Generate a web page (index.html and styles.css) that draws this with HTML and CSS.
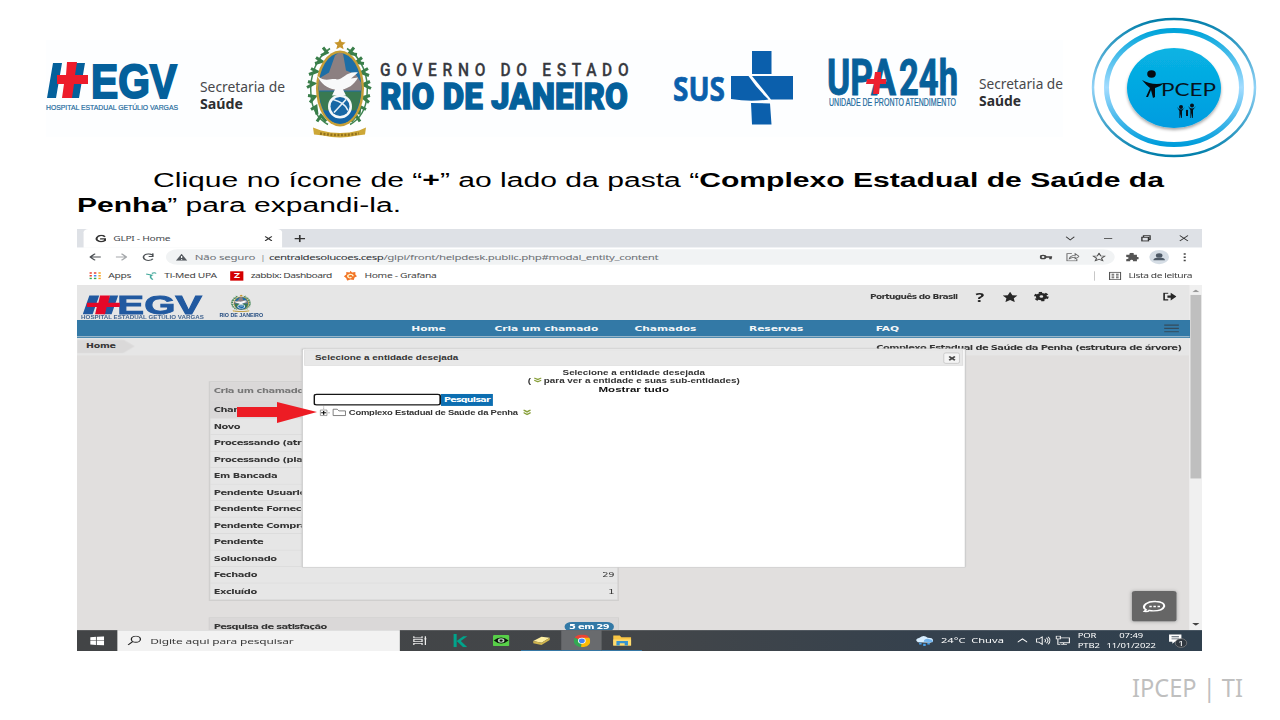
FILE: index.html
```html
<!DOCTYPE html>
<html lang="pt-BR">
<head>
<meta charset="utf-8">
<title>IPCEP | TI</title>
<link rel="stylesheet" href="styles.css">
</head>
<body>
<main class="slide">
<header class="brands">
<svg width="1280" height="165" viewBox="0 0 1280 165">
  <defs>
    <linearGradient id="ring" x1="0" y1="0" x2="0" y2="1"><stop offset="0" stop-color="#00a4da"/><stop offset=".5" stop-color="#a3dcff"/><stop offset="1" stop-color="#009ddb"/></linearGradient>
    <linearGradient id="rim" x1="0" y1="0" x2="0" y2="1"><stop offset="0" stop-color="#007eaa"/><stop offset=".5" stop-color="#92d3f7"/><stop offset="1" stop-color="#007eaa"/></linearGradient>
    <linearGradient id="disc" x1="0" y1="0" x2="0" y2="1"><stop offset="0" stop-color="#08b3e3"/><stop offset="1" stop-color="#009ce0"/></linearGradient>
    <filter id="soft" x="-20%" y="-20%" width="140%" height="140%"><feDropShadow dx="0" dy="2" stdDeviation="1.5" flood-opacity=".35"/></filter>
    <g id="crest">
      <path d="M25 10C12 18 4 37 6 57c1 14 8 24 17 29M42 10c15 9 22 28 20 47-1 14-8 24-17 29" fill="none" stroke="#3f8551" stroke-width="1.500"/>
      <path d="M18 9l4 5-6 3M11 19l6 4-7 2M6 30l6 3-8 3M3 43l6 2-7 4M3 57l7 1-5 6M6 71l5-3 1 8M12 83l4-6 5 6M49 9l-5 6 8 1M57 19l-6 5 8 1M63 30l-7 4 8 3M65 43l-7 3 8 4M65 57l-7 2 6 5M61 71l-6-3-1 8M55 83l-4-6-5 6" fill="none" stroke="#397e4a" stroke-width="3"/>
      <ellipse cx="35" cy="50" rx="24" ry="38" fill="#c69e37"/>
      <ellipse cx="35" cy="50" rx="21.500" ry="35.500" fill="#1d6ea6"/>
      <path d="M14 52V40l10-6 6-17 4-3 4 1 3 17 10 4 5 8v8z" fill="#8c8081"/>
      <path d="M14 53h42q-1 15-7 21H21q-6-6-7-21z" fill="#397951"/>
      <path d="M18 72h34q-6 13-17 13T18 72z" fill="#1364a5"/>
      <path d="M12 37c9 8 14 2 20 4 6 0 10-9 21-7l-7 6 7-1c-4 8-11 11-15 12l3 6H27l3-6c-8-1-14-6-18-14z" fill="#f8f9fa"/>
      <circle cx="35" cy="68" r="12" fill="#f4f8f9"/><circle cx="35" cy="68" r="9.500" fill="#1868a5"/>
      <path d="M28 61q12 3 15 11M29 74l12-13" fill="none" stroke="#e7f1f8" stroke-width="1.600"/>
      <path d="M35 0l1.600 3.600 4 .4-3 2.800 1 4L35 8.700l-3.700 2.100 1-4-3-2.800 4-.4z" fill="#c6952c"/>
      <path d="M8 89l8 3q19 5 38 0l7-3-1 7-8 1q-17 4-34 0l-9-1z" fill="#cda737"/>
      <path d="M15 95q19 3 39 0" fill="none" stroke="#92711d" stroke-width="2.500" stroke-dasharray="2 1.500"/>
    </g>
  </defs>
  <path d="M46 40h1017v97H46z" fill="#fdfeff"/>
  <path d="M53 63h9L56 98h-9zM76 63h9L79 98h-9z" fill="#04609b"/>
  <text x="91" y="98" font-family="Liberation Sans, sans-serif" font-weight="700" fill="#04609b" font-size="48" textLength="86" lengthAdjust="spacingAndGlyphs" stroke="#04609b" stroke-width="2">EGV</text>
  <path d="M67 62h10l-2 13h13v9H74l-2 14H62l2-14h-7v-9h9z" fill="#ed1c2b"/>
  <g font-family="Liberation Sans, sans-serif" fill="#226a9d">
    <text x="46" y="109.500" font-size="8" textLength="132" lengthAdjust="spacingAndGlyphs" stroke="#226a9d" stroke-width=".2">HOSPITAL ESTADUAL GETÚLIO VARGAS</text>
    <text x="829" y="105.500" font-size="10" textLength="127" lengthAdjust="spacingAndGlyphs" stroke="#226a9d" stroke-width=".2">UNIDADE DE PRONTO ATENDIMENTO</text>
  </g>
  <g font-family="Noto Sans, sans-serif" font-size="14" fill="#47484b">
    <text x="200" y="92" textLength="85" lengthAdjust="spacingAndGlyphs">Secretaria de</text>
    <text x="200" y="109" font-weight="700" fill="#2d2e31" textLength="43" lengthAdjust="spacingAndGlyphs">Saúde</text>
    <text x="979" y="88.500" textLength="84" lengthAdjust="spacingAndGlyphs">Secretaria de</text>
    <text x="979" y="105.500" font-weight="700" fill="#2d2e31" textLength="42" lengthAdjust="spacingAndGlyphs">Saúde</text>
  </g>
  <use href="#crest" x="305" y="38.500"/>
  <g transform="translate(380 75.500) scale(.84 1)"><text font-family="Roboto, sans-serif" font-size="18.500" font-weight="500" fill="#373940" stroke="#373940" stroke-width=".3" textLength="296">GOVERNO DO ESTADO</text></g>
  <text x="380" y="108.500" font-family="Roboto, sans-serif" font-size="36" font-weight="900" fill="#04609b" stroke="#04609b" stroke-width="1.300" textLength="248" lengthAdjust="spacingAndGlyphs">RIO DE JANEIRO</text>
  <text x="673" y="100.500" font-family="Open Sans, sans-serif" font-size="34" font-weight="700" fill="#0b5fac" stroke="#0b5fac" stroke-width=".7" textLength="52" lengthAdjust="spacingAndGlyphs">SUS</text>
  <path d="M752 51h19.500v23H752zM731 76h17.500q8 12 20 23.500Q750 102 731 99zM752 76h41v23.500h-22Q761 87 752 76zM751 103l19 .5 1.500 21H752z" fill="#0b5fac"/>
  <g font-family="Roboto, sans-serif" font-weight="700" fill="#07609a" font-size="50" stroke="#07609a" stroke-width="1">
    <text x="827" y="94.500" textLength="46" lengthAdjust="spacingAndGlyphs">UP</text>
    <text x="871" y="94.500" textLength="25" lengthAdjust="spacingAndGlyphs">A</text>
    <text x="899" y="94.500" textLength="59" lengthAdjust="spacingAndGlyphs">24h</text>
  </g>
  <path d="M875 72h6v7h5v5h-6l-1 10h-6l1-10h-8l1-5h7z" fill="#ed202f"/>
  <g fill="none">
    <ellipse cx="1174" cy="87.500" rx="81" ry="68.500" stroke="url(#rim)" stroke-width="2.500"/>
    <ellipse cx="1174" cy="87.500" rx="67.500" ry="57" stroke="url(#ring)" stroke-width="5"/>
  </g>
  <ellipse cx="1174" cy="88" rx="47" ry="40" fill="url(#disc)" filter="url(#soft)"/>
  <ellipse cx="1151.500" cy="74" rx="4.300" ry="3.700" fill="#060b10"/>
  <path d="M1142 80q11 6 22 3-4 4-9 5v9l-2 1-2-8-3 7h-2l4-9q-4-3-8-8z" fill="#060b10"/>
  <text x="1161" y="96" font-family="Lato, sans-serif" font-size="17" fill="#07131c" textLength="55" lengthAdjust="spacingAndGlyphs">PCEP</text>
  <g fill="#061018"><circle cx="1181" cy="107" r="2"/><circle cx="1192" cy="105.500" r="2"/><circle cx="1187" cy="111" r="1.200"/><path d="M1177 107q4 5 8 0l-3 4v7h-.7l-.6-4-.6 4h-.7v-7zM1188 106q4 5 8 0l-3 4v8h-.7l-.6-5-.6 5h-.7v-8zM1186 112h2v4h-2z"/></g>
</svg>
</header>
<svg class="instruction" width="1280" height="64" viewBox="0 165 1280 64">
  <text x="153" y="187" textLength="1011" lengthAdjust="spacingAndGlyphs">Clique no ícone de “<tspan class="strong">+</tspan>” ao lado da pasta “<tspan class="strong">Complexo Estadual de Saúde da</tspan></text>
  <text x="77" y="212" textLength="324" lengthAdjust="spacingAndGlyphs"><tspan class="strong">Penha</tspan>” para expandi-la.</text>
</svg>

<section class="capture"><div class="desktop">
  <div class="tabs">
    <div class="tab"><svg width="15" height="15" viewBox="0 0 15 15"><path d="M13 4Q9 0 5 3 1 7 4 11q4 4 9 0V8H7" fill="none" stroke="#333" stroke-width="2.400"/></svg><span class="tabname">GLPI - Home</span><svg width="9" height="9" viewBox="0 0 9 9"><path d="M0 0l9 9M9 0L0 9" stroke="#333" stroke-width="1.800"/></svg></div>
    <svg class="plus" width="13" height="13" viewBox="0 0 13 13"><path d="M6.500 0v13M0 6.500h13" stroke="#333" stroke-width="2"/></svg>
    <div class="winctl">
      <svg viewBox="0 0 12 12"><path d="M1 3l5 6 5-6"/></svg><svg viewBox="0 0 12 12"><path d="M1 6h10"/></svg><svg viewBox="0 0 12 12"><path d="M1 4h8v7H1zM3 4V1h8v7H9" stroke-width="1.700"/></svg><svg viewBox="0 0 12 12"><path d="M1 1l10 10M11 1L1 11"/></svg>
    </div>
  </div>
  <div class="toolbar">
    <div class="navbtns">
      <svg width="14" height="14" viewBox="0 0 14 14"><path d="M14 7H1M7 1L1 7l6 6"/></svg><svg width="14" height="14" viewBox="0 0 14 14" class="dim"><path d="M0 7h13M7 1l6 6-6 6"/></svg><svg width="15" height="15" viewBox="0 0 15 15"><path d="M12 3A6 6 0 1 0 13 10M13 0v6H8"/></svg>
    </div>
    <div class="address"><svg width="14" height="13" viewBox="0 0 14 13"><path d="M7 0l7 13H0z" fill="#555a60"/><path d="M7 4v4M7 10v1.500" stroke="#fff" stroke-width="1.500"/></svg><span class="unsafe">Não seguro</span><span class="bar">|</span><span class="url"><b>centraldesolucoes.cesp</b>/glpi/front/helpdesk.public.php#modal_entity_content</span>
      <div class="addricons">
        <svg viewBox="0 0 16 16"><circle cx="4" cy="8" r="3" fill="none" stroke="#444" stroke-width="2.500"/><path d="M7 8h8M13 8v4" stroke="#444" stroke-width="3"/></svg><svg viewBox="0 0 16 16" fill="none" stroke="#666" stroke-width="1.300"><path d="M7 2H1v13h12v-4M4 11q1-6 7-6V2l5 5-5 4V8q-4 0-7 3z"/></svg><svg viewBox="0 0 16 16"><path d="M8 1l2 5 5 .5-4 3.500 1.500 5L8 12l-4.500 3L5 10 1 6.500 6 6z" fill="none" stroke="#555" stroke-width="1.500"/></svg>
      </div>
    </div>
    <div class="chromeicons"><svg viewBox="0 0 16 16"><path d="M1 4h4q-1-4 3-4 3 0 2 4h4v4q3-1 3 2t-3 2v4h-5q1-3-1.500-3T6 16H1v-4q3 0 3-2T1 8z" fill="#555"/></svg><span class="avatar"><svg viewBox="0 0 16 16"><circle cx="8" cy="5" r="4" fill="#4d5966"/><path d="M1 14q0-5 7-5t7 5z" fill="#4d5966"/></svg></span><svg viewBox="0 0 16 16"><path d="M8 1v3M8 7v3M8 13v3" stroke="#444" stroke-width="2.500"/></svg></div>
  </div>
  <div class="bookmarks">
    <svg width="14" height="14" viewBox="0 0 14 14"><path d="M0 2h3M0 7h3" stroke="#e94335" stroke-width="3"/><path d="M5.500 2h3" stroke="#e94335" stroke-width="3"/><path d="M11 2h3M11 7h3" stroke="#f6a623" stroke-width="3"/><path d="M5.500 7h3" stroke="#4285f4" stroke-width="3"/><path d="M0 12h8.500" stroke="#34a853" stroke-width="3" stroke-dasharray="3 2.500"/><path d="M11 12h3" stroke="#f6a623" stroke-width="3"/></svg><span class="b1">Apps</span>
    <svg width="14" height="18" viewBox="0 0 14 18"><path d="M1 6l7 2q-4 3 1 8M8 5q3-3 5 0" fill="none" stroke="#45a99c" stroke-width="2"/></svg><span class="b2">Ti-Med UPA</span>
    <span class="zed">Z</span><span class="b3">zabbix: Dashboard</span>
    <svg width="16" height="18" viewBox="0 0 16 16" preserveAspectRatio="none"><path d="M8 0l2 3 4-1v4l2 3-3 2-1 4-4-1-4 2-1-4-3-3 3-3V2l4 1z" fill="#f27427"/><path d="M11 9q0-4-4-3-4 2-1 5 2 1 3-1" fill="none" stroke="#fff3c8" stroke-width="2"/></svg><span class="b4">Home - Grafana</span>
    <span class="reading"><svg width="15" height="15" viewBox="0 0 14 14"><path d="M.7.7h12.600v12.600H.7zM3 4h3M3 7h3M3 10h3M8 4h3M8 7h3M8 10h3" fill="none" stroke="#555" stroke-width="1.400"/></svg>Lista de leitura</span>
  </div>

  <div class="viewport"><div class="glpi">
    <div class="ghead">
      <svg width="235" height="64" viewBox="0 0 235 64">
        <path d="M15 19h12l-8 34H7zM40 19h10l-8 34H32z" fill="#2159a0"/>
        <text x="49" y="53" font-family="Liberation Sans, sans-serif" font-weight="700" fill="#2159a0" stroke="#2159a0" stroke-width="1.500" font-size="46" textLength="103" lengthAdjust="spacingAndGlyphs">EGV</text>
        <path d="M28 19h12l-2 13h14v8H36l-2 13H22l2-13H12v-8h14z" fill="#e50728"/>
        <text x="5" y="62.500" font-family="Liberation Sans, sans-serif" font-size="9" fill="#436591" textLength="149" lengthAdjust="spacingAndGlyphs">HOSPITAL ESTADUAL GETÚLIO VARGAS</text>
        <svg x="186" y="17" width="26" height="32" viewBox="0 0 68 99" preserveAspectRatio="none"><use href="#crest"/></svg>
        <text x="173" y="58" font-family="Liberation Sans, sans-serif" font-weight="700" font-size="9" fill="#244c80" textLength="53" lengthAdjust="spacingAndGlyphs">RIO DE JANEIRO</text>
      </svg>
      <div class="prefs"><span class="lang">Português do Brasil</span><span class="q">?</span><svg width="18" height="19" viewBox="0 0 16 16" preserveAspectRatio="none"><path d="M8 0l2.500 5.500 5.500.5-4 4 1 6-5-3-5 3 1-6-4-4 5.500-.5z" fill="#272727"/></svg><svg width="18" height="18" viewBox="0 0 16 16"><circle cx="8" cy="8" r="4" fill="none" stroke="#272727" stroke-width="4"/><circle cx="8" cy="8" r="6.500" fill="none" stroke="#272727" stroke-width="3" stroke-dasharray="3.400 3.400"/></svg><svg class="logout" width="17" height="16" viewBox="0 0 17 16"><path d="M7 2H2v12h5" fill="none" stroke="#272727" stroke-width="2"/><path d="M6 6h4V1l7 7-7 7v-5H6z" fill="#272727"/></svg></div>
    </div>
    <nav class="gnav"><span>Home</span><span>Cria um chamado</span><span>Chamados</span><span>Reservas</span><span>FAQ</span><svg width="18" height="16" viewBox="0 0 18 16"><path d="M0 2h18M0 8h18M0 14h18" stroke="#354b5b" stroke-width="2.200"/></svg></nav>
    <div class="crumbs"><span class="crumb">Home</span><span class="entity">Complexo Estadual de Saúde da Penha (estrutura de árvore)</span></div>
    <div class="tickets">
      <div class="row head dimtext">Cria um chamado</div><div class="row head">Chamados</div>
      <div class="row">Novo</div><div class="row">Processando (atribuído)</div><div class="row">Processando (planejado)</div><div class="row">Em Bancada</div><div class="row">Pendente Usuario</div><div class="row">Pendente Fornecedor</div><div class="row">Pendente Compras</div><div class="row">Pendente</div><div class="row">Solucionado</div><div class="row">Fechado<i>29</i></div><div class="row">Excluído<i>1</i></div>
    </div>
    <div class="survey">Pesquisa de satisfação<span>5 em 29</span></div>
  </div>
  <div class="scroll"><svg width="9" height="5" viewBox="0 0 9 5"><path d="M0 5l4.500-5L9 5z" fill="#999"/></svg><i></i><svg width="9" height="5" viewBox="0 0 9 5"><path d="M0 0h9L4.500 5z" fill="#444"/></svg></div>
  </div>

  <div class="modal">
    <div class="mtitle"><span>Selecione a entidade desejada</span><button><svg width="9" height="9" viewBox="0 0 9 9"><path d="M1 1l7 7M8 1L1 8" stroke="#444" stroke-width="2.500"/></svg></button></div>
    <div class="mhelp"><span class="h1">Selecione a entidade desejada</span><span class="h2">( <svg width="9" height="10" viewBox="0 0 9 10"><path d="M0 1l4.500 3L9 1M0 5l4.500 3L9 5" fill="none" stroke="#88a03a" stroke-width="2"/></svg> para ver a entidade e suas sub-entidades)</span><span class="h3">Mostrar tudo</span></div>
    <div class="search"><input><b>Pesquisar</b></div>
    <div class="tree"><svg width="42" height="28" viewBox="0 0 42 28"><path d="M11.500 0v9M17 14.500h3" stroke="#888" stroke-dasharray="2 1"/><path d="M7.500 9.500h8v10h-8z" fill="#fff" stroke="#777"/><path d="M8.500 14.500h6M11.500 11v7" stroke="#111" stroke-width="1.600"/><path d="M23 19.500V8h5l2 3h8v8.500z" fill="#fff" stroke="#666" stroke-width="1.200"/></svg><span>Complexo Estadual de Saúde da Penha</span><svg width="9" height="12" viewBox="0 0 9 10" preserveAspectRatio="none"><path d="M0 1l4.500 3L9 1M0 5l4.500 3L9 5" fill="none" stroke="#88a03a" stroke-width="2"/></svg></div>
  </div>
  <div class="chat"><svg width="30" height="30" viewBox="0 0 30 30"><path d="M5 21q-5-5 0-11 5-5 12-4 11 1 10 9-2 8-13 8-3 0-5-1-2 3-6 2z" fill="none" stroke="#fff" stroke-width="2.500"/><path d="M9 15h3M14 15h3M19 15h3" stroke="#fff" stroke-width="3"/></svg></div>

  <div class="taskbar">
    <span class="start"><svg width="17" height="17" viewBox="0 0 17 17"><path d="M0 2l7-1v7H0zM8 1l9-1v8H8zM0 9h7v7l-7-1zM8 9h9v8l-9-1z" fill="#fff"/></svg></span>
    <span class="find"><svg width="17" height="18" viewBox="0 0 17 18"><circle cx="10.500" cy="6.500" r="5.500" fill="none" stroke="#222" stroke-width="1.600"/><path d="M6.500 11L1 17" stroke="#222" stroke-width="1.600"/></svg><span>Digite aqui para pesquisar</span></span>
    <span class="apps">
      <span><svg width="18" height="18" viewBox="0 0 18 18"><path d="M1 1v3h10V1M1 17v-3h10v3M1 7h10v4H1zM15 1v16M13.500 6h3" fill="none" stroke="#eee" stroke-width="1.500"/></svg></span>
      <span><svg width="18" height="24" viewBox="0 0 18 24"><path d="M0 0h4v24H0zM12 4h5l-8 9 8 11h-5L4 13z" fill="#00a48b"/></svg></span>
      <span><svg width="20" height="20" viewBox="0 0 20 20"><rect width="20" height="20" rx="2" fill="#57cf48"/><path d="M1 10q9-11 18 0-9 11-18 0z" fill="#061708"/><circle cx="10" cy="10" r="4" fill="#b9cdbb"/><circle cx="10" cy="10" r="2" fill="#111"/></svg></span>
      <span class="open"><svg width="24" height="18" viewBox="0 0 24 18"><path d="M2 10L12 2l10 2-10 9z" fill="#fff0a2"/><path d="M2 10l10 3v4L2 14zM12 13l10-9v4l-10 9z" fill="#cfb44e"/></svg></span>
      <span class="active"><svg width="20" height="23" viewBox="0 0 20 20" preserveAspectRatio="none"><path d="M10 10L1.500 5A10 10 0 0 1 19 5z" fill="#ea4335"/><path d="M10 10l-8.500-5A10 10 0 0 0 9 20z" fill="#34a853"/><path d="M10 10L9 20A10 10 0 0 0 19 5h-9z" fill="#fbbc05"/><circle cx="10" cy="10" r="4.700" fill="#fff"/><circle cx="10" cy="10" r="3.600" fill="#4285f4"/></svg></span>
      <span class="open"><svg width="22" height="20" viewBox="0 0 22 20"><path d="M0 1h8l2 3h12v15H0z" fill="#f9c544"/><path d="M0 8h22v11H0z" fill="#ffdc70"/><path d="M4 19v-8h14v8h-4v-4H8v4z" fill="#3794d1"/></svg></span>
    </span>
    <span class="tray">
      <svg width="22" height="22" viewBox="0 0 22 22"><path d="M3 14q-5-5 2-8 5-7 10 0 8 0 6 7l-3 2z" fill="#d7eeff"/><path d="M10 13q1-6 6-5 6 1 5 6z" fill="#71b4ee"/><path d="M6 15v3M11 17v4M16 15v3" stroke="#48a2ed" stroke-width="3"/></svg>
      <span class="wx">24°C&nbsp; Chuva</span>
      <svg width="12" height="10" viewBox="0 0 12 10"><path d="M0 8l6-6 6 6" fill="none" stroke="#fff" stroke-width="1.500"/></svg>
      <svg width="18" height="16" viewBox="0 0 18 16"><path d="M1 5h3l4-4v14l-4-4H1zM11 5q2 3 0 6M13 3q4 5 0 10M15 1q5 7 0 14" fill="none" stroke="#eee" stroke-width="1.300"/></svg>
      <svg width="18" height="18" viewBox="0 0 18 18"><path d="M6 4h11v9H5M10 13v3M7 16h7M1 1h5v5H1zM3 6v10h3" fill="none" stroke="#eee" stroke-width="1.400"/></svg>
      <span class="stack">POR<br>PTB2</span><span class="clock">07:49<br>11/01/2022</span>
      <svg width="24" height="28" viewBox="0 0 24 28"><path d="M1 3h15v13H8l-3 4v-4H1z" fill="#fff"/><path d="M4 7h9M4 11h9" stroke="#4c5864" stroke-width="1.500"/><ellipse cx="15.500" cy="18.500" rx="7" ry="8" fill="#303840" stroke="#888"/><text x="12" y="23.500" font-size="13" fill="#fff">1</text></svg>
    </span>
  </div>
</div>
<svg class="pointer" width="82" height="24" viewBox="0 0 82 24"><path d="M1 7h40V2l40 10-40 11v-6H1z" fill="#ed1c24"/></svg>
</section>
<footer><svg width="120" height="40" viewBox="0 0 120 40"><text x="4" y="26" textLength="111" lengthAdjust="spacingAndGlyphs">IPCEP | TI</text></svg></footer>
</main>
</body>
</html>
```
FILE: styles.css
```css
* { box-sizing: border-box; }
body { margin: 0; background: #fff; overflow: hidden; }
svg { display: block; flex: none; }
.slide { width: 1280px; height: 720px; display: flex; flex-direction: column; }
.brands { height: 165px; }
.instruction { font: 20px "Liberation Sans", Arial, sans-serif; fill: #000; }
.strong { font-weight: 700; }
.capture { position: relative; width: 1125px; height: 422px; margin-left: 77px; overflow: hidden; flex: none; }
/* The desktop keeps its native 1366x768 size and is squeezed into the slide. */
.desktop { position: relative; width: 1366px; height: 768px; transform: scale(.82357, .54948); transform-origin: 0 0; font-family: "Noto Sans", sans-serif; display: flex; flex-direction: column; }
.pointer { position: absolute; left: 159px; top: 171px; }

.tabs { height: 34px; background: #dee1e6; display: flex; align-items: center; flex: none; }
.tab { width: 241px; height: 34px; margin-left: 8px; background: #fff; display: flex; align-items: center; padding-left: 13px; border-radius: 6px 6px 0 0; font-size: 12.5px; letter-spacing: -.4px; color: #45494d; }
.tabname { width: 192px; padding-left: 8px; white-space: nowrap; }
.plus { margin-left: 15px; }
.winctl { margin-left: auto; display: flex; gap: 34px; padding-right: 16px; }
.winctl svg { width: 12px; height: 12px; fill: none; stroke: #333; stroke-width: 1.4; }
.toolbar { height: 34px; background: #fff; display: flex; align-items: center; flex: none; }
.navbtns { display: flex; gap: 18px; padding-left: 15px; width: 108px; }
.navbtns svg { fill: none; stroke: #4c5054; stroke-width: 2; }
.navbtns .dim { stroke: #a5a8ab; }
.address { width: 1152px; height: 28px; border-radius: 14px; background: #f1f3f4; display: flex; align-items: center; padding-left: 12px; font-size: 14px; color: #6c7074; white-space: nowrap; }
.unsafe { width: 84px; padding-left: 9px; letter-spacing: -.3px; }
.bar { width: 15px; padding-left: 4px; color: #999; }
.url { width: 490px; letter-spacing: -.43px; }
.url b { font-weight: 400; color: #303337; letter-spacing: -.62px; }
.addricons { margin-left: auto; padding-right: 11px; display: flex; gap: 16px; }
.addricons svg, .chromeicons svg { width: 16px; height: 16px; }
.chromeicons { display: flex; align-items: center; padding-left: 13px; gap: 13px; }
.avatar { width: 24px; height: 26px; border-radius: 50%; background: #d5dde5; display: grid; place-items: center; }
.chromeicons > svg:last-child { margin-left: -2px; }
.bookmarks { height: 34px; background: #fff; display: flex; align-items: center; padding-left: 15px; font-size: 12.5px; letter-spacing: -.4px; color: #444; flex: none; white-space: nowrap; }
.bookmarks > span { padding-left: 9px; }
.b1 { width: 54px; } .b2 { width: 89px; } .b3 { width: 122px; letter-spacing: -.65px; } .b4 { width: 120px; }
.bookmarks .zed { width: 16px; height: 17px; padding: 0; background: #d40000; color: #fff; font-weight: 700; text-align: center; line-height: 17px; }
.bookmarks .reading { margin-left: auto; padding: 0 12px 0 17px; border-left: 1px solid #bbb; display: flex; align-items: center; gap: 9px; letter-spacing: -.55px; }

.viewport { height: 628px; display: flex; flex: none; font: 700 12px "DejaVu Sans", Verdana, sans-serif; color: #353535; white-space: nowrap; }
.glpi { width: 1351px; background: #e1dfde; overflow: hidden; display: flex; flex-direction: column; }
.ghead { height: 64px; background: #e6e6e6; display: flex; flex: none; }
.prefs { height: 42px; flex: 1; display: flex; align-items: center; padding-left: 728px; }
.lang { width: 128px; font-size: 11px; letter-spacing: -.85px; }
.q { font: 700 22px "Noto Sans", sans-serif; width: 33px; color: #222; }
.prefs svg + svg { margin-left: 20px; }
.prefs .logout { margin-left: auto; margin-right: 16px; }
.gnav { height: 31px; flex: none; background: #3379a6; border-bottom: 2px solid #a9c0cf; display: grid; grid-template-columns: 101px 170px 139px 154px 350px 1fr; align-items: center; padding-left: 406px; color: #f2f5f7; font-size: 13px; letter-spacing: -.1px; }
.crumbs { height: 33px; flex: none; background: #e6e6e6; display: flex; align-items: center; justify-content: space-between; padding-right: 10px; }
.crumb { width: 70px; height: 25px; align-self: flex-start; margin-top: 4px; padding: 5px 11px; background: #dad9d9; font-size: 11.5px; letter-spacing: -.3px; clip-path: polygon(0 0, 80% 0, 100% 50%, 80% 100%, 0 100%); }
.entity { padding-top: 7px; letter-spacing: -.72px; }
.tickets { width: 498px; margin: 47px 0 0 160px; border: 2px solid #d0cfce; flex: none; }
.row { height: 30px; display: flex; align-items: center; justify-content: space-between; padding: 0 4px; background: #e6e6e6; border-bottom: 1px solid #d5d5d5; letter-spacing: -.55px; }
.row i { font-style: normal; font-weight: 400; }
.row.head { height: 33px; background: #dad8d8; border: 0; }
.row.dimtext { color: #777; padding-bottom: 4px; }
.survey { width: 498px; height: 34px; flex: none; margin: 30px 0 0 160px; background: #dad8d8; border: 1px solid #d0cfce; padding: 0 5px; display: flex; align-items: center; justify-content: space-between; letter-spacing: -.8px; }
.survey span { background: #3379a6; color: #fff; border-radius: 10px; height: 18px; line-height: 18px; padding: 0 6px; }
.scroll { width: 15px; background: #f0f0f0; display: flex; flex-direction: column; align-items: center; padding: 8px 0; }
.scroll i { width: 13px; height: 334px; background: #bfbfbf; margin: 5px 0 auto; }

.modal { position: absolute; left: 273px; top: 218px; width: 806px; height: 398px; background: #fff; border: 1px solid #bbb; padding: 2px; font: 700 11px "DejaVu Sans", Verdana, sans-serif; color: #333; white-space: nowrap; box-shadow: 0 0 3px #aaa; }
.mtitle { height: 28px; background: #e8e8e8; border: 1px solid #ddd; display: flex; align-items: center; justify-content: space-between; padding: 0 3px 0 12px; }
.mtitle button { width: 20px; height: 20px; border: 1px solid #bbb; border-radius: 3px; background: #f4f4f4; padding: 0; display: grid; place-items: center; }
.mhelp { display: flex; flex-direction: column; align-items: center; line-height: 15px; padding-top: 5px; }
.mtitle span, .h1, .h2, .tree span { font-family: "Liberation Sans", Arial, sans-serif; letter-spacing: -.02px; font-size: 12px; }
.h2 svg { display: inline-block; }
.h3 { font: 700 14px "Liberation Sans", sans-serif; line-height: 15px; color: #111; }
.search { display: flex; padding-left: 11px; height: 23px; align-items: center; }
.search input { width: 155px; height: 21px; border: 2px solid #151515; border-radius: 4px; background: #fff; }
.search b { width: 63px; height: 22px; line-height: 22px; background: #0c6eb1; color: #fff; text-align: center; font-size: 11.500px; letter-spacing: -.9px; }
.tree { display: flex; align-items: center; padding-left: 12px; height: 24px; }
.mtitle span { letter-spacing: .02px; }
.tree span { font-size: 11.5px; letter-spacing: -.29px; width: 212px; }
.chat { position: absolute; left: 1281px; top: 659px; width: 54px; height: 55px; border-radius: 4px; background: #666; display: grid; place-items: center; box-shadow: 0 1px 5px #aaa; }

.taskbar { height: 38px; background: linear-gradient(90deg, #424446 0, #434649 50%, #35414d 75%, #30404e); display: flex; align-items: center; flex: none; color: #fff; }
.start { width: 49px; display: grid; place-items: center; }
.find { width: 343px; height: 38px; background: #f2f2f2; color: #3a3a3a; display: flex; align-items: center; gap: 11px; padding-left: 12px; font-size: 14.5px; letter-spacing: -.2px; white-space: nowrap; }
.apps { height: 38px; display: flex; }
.apps > span { width: 49px; height: 38px; display: grid; place-items: center; }
.apps .active { background: #696b6e; }
.apps .open, .apps .active { box-shadow: inset 0 -2px #3577a5; }
.tray { margin-left: auto; display: grid; grid-template-columns: 31px 93px 22px 24px 27px 34px 76px 29px; align-items: center; width: 348px; white-space: nowrap; }
.wx { font-size: 13.500px; }
.stack, .clock { font-size: 11.500px; line-height: 17px; letter-spacing: -.1px; }
.clock { text-align: center; width: 62px; }
footer { display: flex; justify-content: flex-end; padding: 20px 32px 0 0; }
footer text { font: 25px "Noto Sans", "Open Sans", sans-serif; fill: #bfbfbf; }
```
